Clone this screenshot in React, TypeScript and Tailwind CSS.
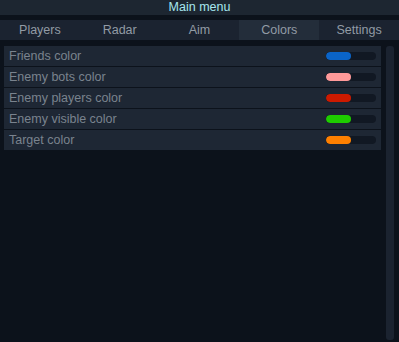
const TABS = ["Players", "Radar", "Aim", "Colors", "Settings"];

const COLORS = [
  { label: "Friends color", color: "bg-[#0a64c8]" },
  { label: "Enemy bots color", color: "bg-[#ff9a9a]" },
  { label: "Enemy players color", color: "bg-[#cc1a00]" },
  { label: "Enemy visible color", color: "bg-[#1ecc00]" },
  { label: "Target color", color: "bg-[#ff8000]" },
];

export default function App() {
  return (
    <div
      className="w-[399px] h-[342px] bg-[#0c121b] overflow-hidden"
      style={{ fontFamily: '"Liberation Sans", Arial, sans-serif' }}
    >
      {/* Title */}
      <div className="h-[15px] bg-[#1d2631] text-center text-[12.5px] leading-[15px] text-[#a6e6ee]">
        Main menu
      </div>

      {/* Tabs */}
      <div className="mt-[5px] h-[20px] flex bg-[#1b2330]">
        {TABS.map((tab) => (
          <div
            key={tab}
            className={`flex-1 flex items-center justify-center pt-[1px] text-[12.5px] text-[#929ba5] ${
              tab === "Colors" ? "bg-[#232d3a]" : ""
            }`}
          >
            {tab}
          </div>
        ))}
      </div>

      {/* Body */}
      <div className="flex mt-[6px] pl-[4px]">
        <div className="w-[377px] flex flex-col gap-[1px] self-start">
          {COLORS.map((c) => (
            <div
              key={c.label}
              className="h-[20px] bg-[#1e2734] flex items-center justify-between pl-[5px] pr-[5px]"
            >
              <span className="text-[12.5px] pt-[1px] text-[#7a838e]">{c.label}</span>
              <div className="w-[50px] h-[8px] rounded-full bg-[#111823] overflow-hidden">
                <div className={`w-[25px] h-full rounded-full ${c.color}`} />
              </div>
            </div>
          ))}
        </div>
        <div className="ml-[5px] w-[8px] h-[294px] rounded-[3px] bg-[#1b2330]" />
      </div>
    </div>
  );
}
